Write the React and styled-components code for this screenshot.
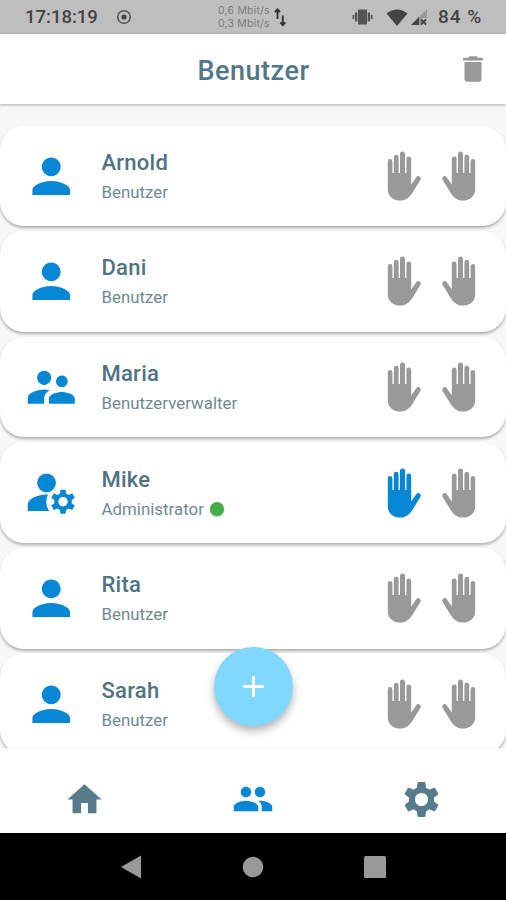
import React from "react";
import styled, { createGlobalStyle } from "styled-components";
import { MdPerson, MdSupervisorAccount, MdHome, MdPeople, MdDelete, MdAdd } from "react-icons/md";

const GlobalStyle = createGlobalStyle`
  * { box-sizing: border-box; }
  body { margin: 0; background: #fff; font-family: Roboto, "Liberation Sans", sans-serif; }
  svg { display: block; flex: none; }
`;

const Screen = styled.div`
  width: 506px;
  height: 900px;
  display: flex;
  flex-direction: column;
  overflow: hidden;
  background: #f7f7f7;
`;

const StatusBar = styled.div`
  height: 34px;
  flex: none;
  display: flex;
  align-items: center;
  background: #bebebe;
  color: #444;
  padding-left: 25px;
`;

const Clock = styled.span`
  width: 91px;
  font: 500 18.5px/34px Roboto, sans-serif;
  white-space: nowrap;
`;

const Traffic = styled.div`
  margin-left: 86px;
  width: 56px;
  font: 400 10.5px/13px Inter, sans-serif;
  letter-spacing: 0.2px;
  color: #7c7c7c;
  white-space: nowrap;
`;

const Battery = styled.span`
  margin-left: 10px;
  font: 500 19px/34px Roboto, sans-serif;
  letter-spacing: 1px;
  white-space: nowrap;
`;

const StatusIcon = styled.svg`
  margin-left: ${(p) => p.$gap}px;
`;

const Header = styled.header`
  height: 70px;
  flex: none;
  display: grid;
  grid-template-columns: 1fr auto 1fr;
  align-items: center;
  background: #fff;
  box-shadow: 0 1px 3px rgba(0, 0, 0, 0.3);
  padding: 0 16px 0 17px;
  z-index: 1;
`;

const Title = styled.h1`
  grid-column: 2;
  margin: 0;
  padding-top: 4px;
  font-size: 27px;
  font-weight: 500;
  letter-spacing: 0.5px;
  color: #527788;
`;

const DeleteButton = styled.button`
  justify-self: end;
  border: 0;
  padding: 0;
  background: none;
  color: #999;
`;

const List = styled.main`
  flex: 1;
  min-height: 0;
  overflow: hidden;
  padding-top: 21.5px;
  display: flex;
  flex-direction: column;
  gap: 4.8px;
`;

const Card = styled.article`
  height: 100.8px;
  flex: none;
  display: flex;
  align-items: center;
  background: #fff;
  border-radius: 24px;
  box-shadow: 0 2px 3px rgba(0, 0, 0, 0.3);
  padding: 0 30px 0 22.5px;
`;

const Avatar = styled.div`
  color: #0587d4;
  width: 79px;
`;

const Info = styled.div`
  flex: 1;
  padding-top: 3px;
`;

const Name = styled.div`
  font-size: 22px;
  line-height: 30px;
  font-weight: 500;
  letter-spacing: 0.25px;
  color: #4f7382;
`;

const Role = styled.div`
  display: flex;
  align-items: center;
  gap: 6.5px;
  font-size: 16.8px;
  line-height: 29px;
  letter-spacing: 0.05px;
  color: #718994;
`;

const OnlineDot = styled.span`
  width: 14px;
  height: 14px;
  border-radius: 50%;
  background: #40ad49;
  box-shadow: 0 1px 2px rgba(0, 0, 0, 0.3);
`;

const Hands = styled.div`
  display: flex;
  gap: 21px;
`;

const HandIcon = styled.svg`
  color: ${(p) => (p.$active ? "#0587d4" : "#999")};
  transform: ${(p) => (p.$mirror ? "scaleX(-1)" : "none")};
`;

const Footer = styled.div`
  position: relative;
  height: 85px;
  flex: none;
`;

const Tabs = styled.nav`
  height: 100%;
  display: grid;
  grid-template-columns: repeat(3, 1fr);
  place-items: center;
  background: #fff;
  border-top: 1px solid #f7f7f7;
  padding-top: 16px;
`;

const Tab = styled.a`
  color: ${(p) => (p.$active ? "#0587d4" : "#587b8c")};
`;

const AddButton = styled.button`
  position: absolute;
  left: 50%;
  top: -101px;
  width: 79px;
  height: 79px;
  margin-left: -39px;
  border: 0;
  padding: 0;
  border-radius: 50%;
  display: grid;
  place-items: center;
  color: #fff;
  background: #80d7ff;
  box-shadow: 0 5px 9px rgba(0, 0, 0, 0.3);
`;

const SystemBar = styled.div`
  height: 67px;
  flex: none;
  display: flex;
  justify-content: space-between;
  align-items: center;
  background: #000;
  padding: 0 120px;
`;

function Hand({ active, mirror }) {
  return (
    <HandIcon $active={active} $mirror={mirror} width="34" height="50" viewBox="0 0 34 50" fill="currentColor">
      <path d="M.8 10.4a2.3 2.3 0 0 1 4.6 0V22h1.4V6.200a2.400 2.400 0 0 1 4.800 0V22h1.400V3.100a2.500 2.500 0 0 1 5 0V22h1.400V8a2.400 2.400 0 0 1 4.800 0v25.600l5-7.400a2.500 2.500 0 0 1 4.500 1.800c-.1.7-.4 1.200-.8 1.800l-7.100 11.400C23.400 45.200 19.400 49.600 13.200 49.600 6 49.600.8 45 .8 38.500Z" />
    </HandIcon>
  );
}

function AdminIcon({ size }) {
  return (
    <svg width={size} height={size} viewBox="0 0 24 24" fill="currentColor">
      <circle cx="10" cy="8" r="4" />
      <path d="M10.6 13H10c-3 0-8 1.4-8 4.5V20h9.1a7.2 7.2 0 0 1-.5-7Z" />
      <path
        fillRule="evenodd"
        d="M20.75 16c0-.22-.03-.42-.06-.63l1.3-1.01-1.1-1.9-1.51.66c-.32-.27-.68-.48-1.08-.63L18.1 10.9h-2.2l-.2 1.59c-.4.15-.76.36-1.08.63l-1.51-.66-1.1 1.9 1.3 1.01c-.03.21-.06.41-.06.63s.03.42.06.63l-1.3 1.01 1.1 1.9 1.51-.66c.32.27.68.48 1.08.63l.2 1.59h2.2l.2-1.59c.4-.15.76-.36 1.08-.63l1.51.66 1.1-1.9-1.3-1.01c.03-.21.06-.41.06-.63ZM17 18a2 2 0 1 1 0-4 2 2 0 0 1 0 4Z"
      />
    </svg>
  );
}

function SettingsIcon() {
  return (
    <svg width="35" height="35" viewBox="0 0 34 34" fill="currentColor">
      <circle cx="17" cy="17" r="9.3" fill="none" stroke="currentColor" strokeWidth="5.8" />
      {[0, 60, 120, 180, 240, 300].map((angle) => (
        <path
          key={angle}
          d="M14 0h6q.7 0 .8.7l.9 6.3h-9.4l.9-6.3Q13.3 0 14 0Z"
          transform={`rotate(${angle} 17 17)`}
        />
      ))}
    </svg>
  );
}

const users = [
  { name: "Arnold", role: "Benutzer", Icon: MdPerson },
  { name: "Dani", role: "Benutzer", Icon: MdPerson },
  { name: "Maria", role: "Benutzerverwalter", Icon: MdSupervisorAccount },
  { name: "Mike", role: "Administrator", Icon: AdminIcon, online: true, left: true },
  { name: "Rita", role: "Benutzer", Icon: MdPerson },
  { name: "Sarah", role: "Benutzer", Icon: MdPerson },
];

function UserCard({ user }) {
  const { Icon } = user;
  return (
    <Card>
      <Avatar><Icon size={56.5} /></Avatar>
      <Info>
        <Name>{user.name}</Name>
        <Role>{user.role}{user.online && <OnlineDot />}</Role>
      </Info>
      <Hands>
        <Hand active={user.left} />
        <Hand mirror />
      </Hands>
    </Card>
  );
}

export default function App() {
  return (
    <Screen>
      <GlobalStyle />
      <StatusBar>
        <Clock>17:18:19</Clock>
        <StatusIcon $gap={0} width="16" height="16" viewBox="0 0 16 16">
          <circle cx="8" cy="8" r="6.3" fill="none" stroke="#555" strokeWidth="1.6" />
          <circle cx="8" cy="8" r="2.6" fill="#444" />
        </StatusIcon>
        <Traffic>0,6 Mbit/s<br />0,3 Mbit/s</Traffic>
        <StatusIcon $gap={0} width="12" height="20" viewBox="0 0 12 20" fill="none" stroke="#333" strokeWidth="1.9">
          <path d="M3.5 12V2.5M1 5l2.5-2.7L6 5M8.8 8.5v9M6.3 15.5l2.5 2.7 2.5-2.7" />
        </StatusIcon>
        <StatusIcon $gap={66} width="21" height="16" viewBox="0 0 21 16" fill="#555">
          <path d="M6 .5h9v15H6zM3 3.5h2.3v9H3zM15.7 3.5H18v9h-2.3zM.5 6h1.8v4H.5zM18.7 6h1.8v4h-1.8z" />
        </StatusIcon>
        <StatusIcon $gap={13} width="22" height="17" viewBox="0 0 22 17" fill="#444">
          <path d="M.5 4.5Q11-3.5 21.5 4.5L11 17z" />
        </StatusIcon>
        <StatusIcon $gap={2} width="18" height="18" viewBox="0 0 18 18">
          <path d="M17 1v9h-5v7H1z" fill="#999" />
          <path d="M9 9v8H1z" fill="#444" />
          <path d="m11 11.5 5 5m0-5-5 5" stroke="#444" strokeWidth="1.8" />
        </StatusIcon>
        <Battery>84 %</Battery>
      </StatusBar>
      <Header>
        <Title>Benutzer</Title>
        <DeleteButton aria-label="Löschen"><MdDelete size={34} /></DeleteButton>
      </Header>
      <List>
        {users.map((user) => <UserCard key={user.name} user={user} />)}
      </List>
      <Footer>
        <AddButton aria-label="Hinzufügen"><MdAdd size={35} /></AddButton>
        <Tabs>
          <Tab><MdHome size={41} /></Tab>
          <Tab $active><MdPeople size={42} /></Tab>
          <Tab><SettingsIcon /></Tab>
        </Tabs>
      </Footer>
      <SystemBar>
        <svg width="22" height="24" viewBox="0 0 22 24" fill="#999"><path d="M21 .5v23L1 12z" /></svg>
        <svg width="22" height="22" viewBox="0 0 22 22" fill="#999"><circle cx="11" cy="11" r="10.3" /></svg>
        <svg width="22" height="22" viewBox="0 0 22 22" fill="#999"><rect width="22" height="22" rx="1.5" /></svg>
      </SystemBar>
    </Screen>
  );
}
